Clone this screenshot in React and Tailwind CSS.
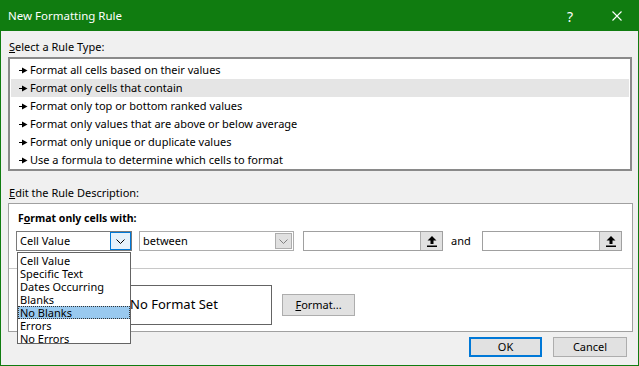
import React from 'react'

const font = { fontFamily: '"Noto Sans", "Open Sans", sans-serif' }

const rules = [
  'Format all cells based on their values',
  'Format only cells that contain',
  'Format only top or bottom ranked values',
  'Format only values that are above or below average',
  'Format only unique or duplicate values',
  'Use a formula to determine which cells to format',
]

const options = ['Cell Value', 'Specific Text', 'Dates Occurring', 'Blanks', 'No Blanks', 'Errors', 'No Errors']

function RuleArrow() {
  return (
    <svg width="9" height="7" viewBox="0 0 9 7" className="shrink-0">
      <rect x="0" y="3" width="4" height="1" fill="#000" />
      <polygon points="3,0.5 8.5,3.5 3,6.5" fill="#000" />
    </svg>
  )
}

function Chevron({ color }) {
  return (
    <svg width="9" height="5" viewBox="0 0 9 5">
      <polyline points="0.5,0.5 4.5,4.5 8.5,0.5" fill="none" stroke={color} strokeWidth="1" />
    </svg>
  )
}

function RefIcon() {
  return (
    <svg width="10" height="11" viewBox="0 0 10 11">
      <polygon points="5,0 9.5,4.5 6.5,4.5 6.5,8 3.5,8 3.5,4.5 0.5,4.5" fill="#000" />
      <rect x="0" y="9.5" width="10" height="1.5" fill="#000" />
    </svg>
  )
}

function RefInput({ width }) {
  return (
    <div className="h-[20px] bg-white border border-[#a0a0a0] flex justify-end" style={{ width }}>
      <div className="w-[22px] h-full bg-[#e1e1e1] border-l border-[#adadad] flex items-center justify-center">
        <RefIcon />
      </div>
    </div>
  )
}

export default function App() {
  return (
    <div className="w-[639px] h-[366px] bg-[#f0f0f0] border-x border-b border-[#107c10] flex flex-col relative text-[11px] text-black overflow-hidden" style={font}>
      {/* title bar */}
      <div className="h-[31px] -mx-px bg-[#107c10] flex items-center pl-[8px] text-white text-[11.5px] shrink-0">
        <span>New Formatting Rule</span>
        <span className="absolute left-[566px] top-[6px] text-[14px]">?</span>
        <svg className="absolute left-[611px] top-[11px]" width="10" height="10" viewBox="0 0 10 10">
          <path d="M0.5 0.5 L9.5 9.5 M9.5 0.5 L0.5 9.5" stroke="#fff" strokeWidth="1.1" />
        </svg>
      </div>

      <div className="px-[7px] flex flex-col">
        <div className="mt-[8px] h-[16px] leading-[16px] pl-[1px]"><span className="underline">S</span>elect a Rule Type:</div>
        <div className="mt-[2px] h-[114px] w-[624px] bg-white border-2 border-[#8a8a8a] pt-[2px] px-[1px]">
          {rules.map((r, i) => (
            <div key={r} className={`h-[18px] flex items-center gap-[2px] pl-[8px] ${i === 1 ? 'bg-[#e5e5e5]' : ''}`}>
              <RuleArrow />
              <span className="leading-[18px]">{r}</span>
            </div>
          ))}
        </div>

        <div className="mt-[14px] h-[16px] leading-[16px] pl-[1px]"><span className="underline">E</span>dit the Rule Description:</div>
        <div className="mt-[2px] h-[129px] w-[625px] bg-white border border-[#a0a0a0] flex flex-col">
          <div className="mt-[6px] h-[16px] leading-[16px] pl-[9px] font-bold text-[10.5px]">F<span className="underline">o</span>rmat only cells with:</div>
          <div className="mt-[5px] h-[20px] pl-[7px] flex items-center">
            <div className="w-[116px] h-[20px] border border-[#7a7a7a] bg-white flex items-center justify-between pl-[3px]">
              <span>Cell Value</span>
              <div className="w-[21px] h-full border border-[#0078d7] bg-[#e5f1fb] flex items-center justify-center">
                <Chevron color="#000" />
              </div>
            </div>
            <div className="ml-[7px] w-[155px] h-[20px] border border-[#adadad] bg-white flex items-center justify-between pl-[3px] pr-[1px]">
              <span>between</span>
              <div className="w-[17px] h-[16px] border border-[#adadad] bg-[#e0e0e0] flex items-center justify-center">
                <Chevron color="#808080" />
              </div>
            </div>
            <div className="ml-[9px]"><RefInput width={140} /></div>
            <span className="ml-[8px] w-[31px]">and</span>
            <RefInput width={140} />
          </div>
          <div className="mt-[17px] h-px bg-[#c8c8c8]" />
          <div className="mt-[16px] flex items-center">
            <div className="ml-[67px] w-[196px] h-[40px] border border-[#646464] flex items-center justify-center text-[13px]">
              No Format Set
            </div>
            <div className="ml-[10px] w-[73px] h-[22px] bg-[#e1e1e1] border border-[#adadad] flex items-center justify-center">
              <span><span className="underline">F</span>ormat...</span>
            </div>
          </div>
        </div>

        <div className="mt-[5px] flex justify-end gap-[11px] pr-[4px]">
          <div className="w-[73px] h-[20px] bg-[#e1e1e1] border-2 border-[#0078d7] flex items-center justify-center">OK</div>
          <div className="w-[74px] h-[20px] bg-[#e1e1e1] border border-[#adadad] flex items-center justify-center">Cancel</div>
        </div>
      </div>

      {/* open dropdown list */}
      <div className="absolute left-[16px] top-[252px] w-[114px] h-[92px] bg-white border border-[#646464] py-[0.5px]">
        {options.map((o) => (
          <div key={o} className={`h-[13px] leading-[13px] pl-[2px] ${o === 'No Blanks' ? 'bg-[#99c9ef] outline outline-1 outline-dotted outline-[#333] -outline-offset-1' : ''}`}>
            {o}
          </div>
        ))}
      </div>
    </div>
  )
}
